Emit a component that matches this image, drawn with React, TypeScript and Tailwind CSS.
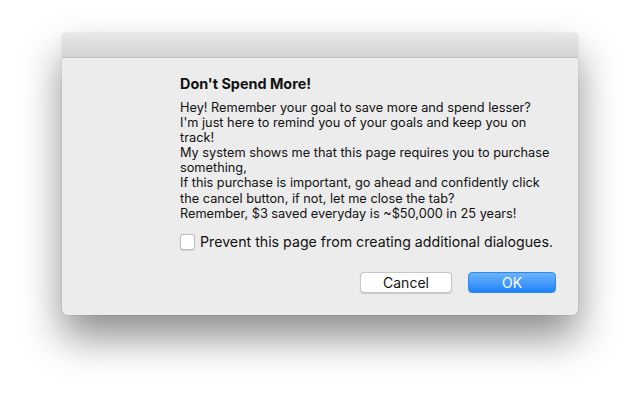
import React from "react";

export default function App() {
  const lines = [
    "Hey! Remember your goal to save more and spend lesser?",
    "I'm just here to remind you of your goals and keep you on",
    "track!",
    "My system shows me that this page requires you to purchase",
    "something,",
    "If this purchase is important, go ahead and confidently click",
    "the cancel button, if not, let me close the tab?",
    "Remember, $3 saved everyday is ~$50,000 in 25 years!",
  ];
  return (
    <div
      className="w-[640px] h-[400px] bg-white pl-[62px] pt-[33px] overflow-hidden"
      style={{ fontFamily: "Inter, 'Noto Sans', sans-serif" }}
    >
      <div className="w-[516px] h-[282px] rounded-[5px] overflow-hidden bg-[#ececec] shadow-[0_0_1px_rgba(0,0,0,0.35),0_22px_40px_rgba(0,0,0,0.45)] flex flex-col">
        <div className="h-[25px] shrink-0 bg-gradient-to-b from-[#e9e7e9] to-[#d4d2d4] border-b border-[#c6c4c6]" />
        <div className="flex-1 pl-[118px] pr-[22px] pt-[17px] text-[#111]">
          <div className="text-[14.4px] font-bold leading-[17px]">Don't Spend More!</div>
          <div className="mt-[8px] text-[12.75px] leading-[15.1px]">
            {lines.map((l, i) => (
              <div key={i} className="whitespace-nowrap">
                {l}
              </div>
            ))}
          </div>
          <label className="mt-[12px] flex items-center gap-[5px] text-[14.2px] leading-[18px]">
            <span className="block shrink-0 w-[15px] h-[16px] rounded-[3px] bg-white border border-[#bdbdbd] shadow-[0_0.5px_1px_rgba(0,0,0,0.12)]" />
            <span className="whitespace-nowrap">Prevent this page from creating additional dialogues.</span>
          </label>
          <div className="mt-[21px] flex justify-end gap-[16px]">
            <button className="w-[92px] h-[21px] rounded-[4px] bg-white border border-[#c8c8c8] shadow-[0_0.5px_1px_rgba(0,0,0,0.15)] text-[14px] leading-[19px] text-[#111]">
              Cancel
            </button>
            <button className="w-[88px] h-[21px] rounded-[4px] bg-gradient-to-b from-[#6cb3fa] to-[#1a82fb] border border-[#2b8af5] text-[14px] leading-[19px] text-white">
              OK
            </button>
          </div>
        </div>
      </div>
    </div>
  );
}
